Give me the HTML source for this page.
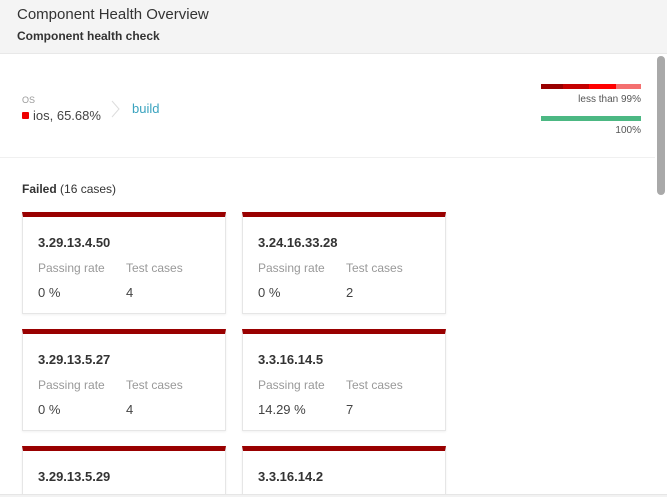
<!DOCTYPE html>
<html style="width:667px;height:497px;overflow:hidden"><head><style>
*{margin:0;padding:0;box-sizing:border-box}
body{width:667px;height:497px;overflow:hidden;background:#fff;font-family:"Liberation Sans",sans-serif;color:#333;position:relative}
.a{position:absolute;white-space:nowrap}
.card{position:absolute;width:204px;background:#fff;border:1px solid #e6e6e6;border-top:5px solid #900;box-shadow:0 1px 2px rgba(0,0,0,.06);overflow:hidden}
.card .t{position:absolute;left:15px;top:18px;font-size:13px;font-weight:bold;color:#333}
.card .l{position:absolute;top:44px;font-size:12px;color:#999}
.card .v{position:absolute;top:68px;font-size:13px;color:#444}
</style></head><body>
<div class="a" style="left:0;top:0;width:667px;height:54px;background:#f4f4f4;border-bottom:1px solid #e8e8e8"></div>
<div class="a" style="left:17px;top:6px;font-size:15px;color:#333">Component Health Overview</div>
<div class="a" style="left:17px;top:29px;font-size:12px;font-weight:bold;color:#333">Component health check</div>
<div class="a" style="left:657px;top:56px;width:8px;height:139px;background:#a9a9a9;border-radius:4px"></div>
<div class="a" style="left:22px;top:95px;font-size:9px;color:#999">OS</div>
<div class="a" style="left:22px;top:112px;width:7px;height:7px;background:#e00;border-radius:1px"></div>
<div class="a" style="left:33px;top:108px;font-size:13px;color:#444">ios, 65.68%</div>
<svg class="a" style="left:110px;top:100px" width="12" height="18"><path d="M2 1 L9 9 L2 17" fill="none" stroke="#ddd" stroke-width="1"/></svg>
<div class="a" style="left:132px;top:101px;font-size:13px;color:#3aa3bf">build</div>
<div class="a" style="left:541px;top:84px;width:22px;height:5px;background:#900"></div>
<div class="a" style="left:563px;top:84px;width:26px;height:5px;background:#c40000"></div>
<div class="a" style="left:589px;top:84px;width:27px;height:5px;background:#f00"></div>
<div class="a" style="left:616px;top:84px;width:25px;height:5px;background:#f47070"></div>
<div class="a" style="right:26px;top:94px;font-size:10px;color:#555">less than 99%</div>
<div class="a" style="left:541px;top:116px;width:100px;height:5px;background:#4cb883"></div>
<div class="a" style="right:26px;top:125px;font-size:10px;color:#555">100%</div>
<div class="a" style="left:0;top:157px;width:655px;height:1px;background:#f0f0f0"></div>
<div class="a" style="left:22px;top:182px;font-size:12px;color:#333"><b>Failed</b> (16 cases)</div>

<div class="card" style="left:22px;top:212px;height:102px"><div class="t">3.29.13.4.50</div><div class="l" style="left:15px">Passing rate</div><div class="l" style="left:103px">Test cases</div><div class="v" style="left:15px">0 %</div><div class="v" style="left:103px">4</div></div>
<div class="card" style="left:242px;top:212px;height:102px"><div class="t">3.24.16.33.28</div><div class="l" style="left:15px">Passing rate</div><div class="l" style="left:103px">Test cases</div><div class="v" style="left:15px">0 %</div><div class="v" style="left:103px">2</div></div>
<div class="card" style="left:22px;top:329px;height:102px"><div class="t">3.29.13.5.27</div><div class="l" style="left:15px">Passing rate</div><div class="l" style="left:103px">Test cases</div><div class="v" style="left:15px">0 %</div><div class="v" style="left:103px">4</div></div>
<div class="card" style="left:242px;top:329px;height:102px"><div class="t">3.3.16.14.5</div><div class="l" style="left:15px">Passing rate</div><div class="l" style="left:103px">Test cases</div><div class="v" style="left:15px">14.29 %</div><div class="v" style="left:103px">7</div></div>
<div class="card" style="left:22px;top:446px;height:49px;border-bottom:none"><div class="t">3.29.13.5.29</div></div>
<div class="card" style="left:242px;top:446px;height:49px;border-bottom:none"><div class="t">3.3.16.14.2</div></div>
<div class="a" style="left:0;top:494px;width:667px;height:3px;background:#f2f2f2;border-top:1px solid #e6e6e6"></div>
</body></html>
